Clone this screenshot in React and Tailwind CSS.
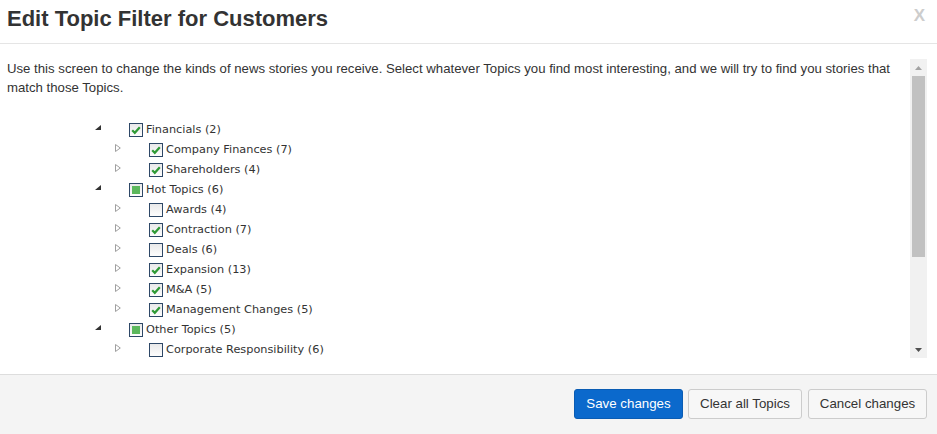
import React from "react";

const topics = [
  { label: "Financials (2)", level: 0, state: "checked" },
  { label: "Company Finances (7)", level: 1, state: "checked" },
  { label: "Shareholders (4)", level: 1, state: "checked" },
  { label: "Hot Topics (6)", level: 0, state: "partial" },
  { label: "Awards (4)", level: 1, state: "none" },
  { label: "Contraction (7)", level: 1, state: "checked" },
  { label: "Deals (6)", level: 1, state: "none" },
  { label: "Expansion (13)", level: 1, state: "checked" },
  { label: "M&A (5)", level: 1, state: "checked" },
  { label: "Management Changes (5)", level: 1, state: "checked" },
  { label: "Other Topics (5)", level: 0, state: "partial" },
  { label: "Corporate Responsibility (6)", level: 1, state: "none" },
];

function Checkbox({ state }) {
  return (
    <span className="flex h-[14px] w-[14px] shrink-0 items-center justify-center border border-[#2d4766] bg-gradient-to-b from-[#e9e9e9] to-[#fdfdfd]">
      {state === "checked" && (
        <svg width="12" height="12" viewBox="0 0 12 12">
          <path d="M2.2 6.2 L4.8 8.8 L9.8 3.2" fill="none" stroke="#2f9a35" strokeWidth="2.2" />
        </svg>
      )}
      {state === "partial" && <span className="h-[8px] w-[8px] bg-[#5cb85c]" />}
    </span>
  );
}

function Toggle({ level }) {
  if (level === 0) {
    return (
      <span className="w-[34px] shrink-0 self-start pt-[5px]">
        <svg width="6" height="5" viewBox="0 0 6 5" className="block">
          <polygon points="6,0 6,5 0,5" fill="#333" />
        </svg>
      </span>
    );
  }
  return (
    <span className="w-[34px] shrink-0 self-start pt-[4px]">
      <svg width="6" height="8" viewBox="0 0 6 8" className="block">
        <polygon points="0.5,0.5 5.3,4 0.5,7.5" fill="none" stroke="#a0a0a0" strokeWidth="1" />
      </svg>
    </span>
  );
}

function Scrollbar() {
  return (
    <div className="flex h-full w-[17px] shrink-0 flex-col bg-[#f1f1f1]">
      <div className="flex h-[17px] items-center justify-center">
        <svg width="7" height="4" viewBox="0 0 7 4">
          <polygon points="3.5,0 7,4 0,4" fill="#a3a3a3" />
        </svg>
      </div>
      <div className="mx-[2px] h-[181px] bg-[#c1c1c1]" />
      <div className="flex-1" />
      <div className="flex h-[17px] items-center justify-center">
        <svg width="7" height="4" viewBox="0 0 7 4">
          <polygon points="0,0 7,0 3.5,4" fill="#505050" />
        </svg>
      </div>
    </div>
  );
}

export default function App() {
  return (
    <div className="flex h-[434px] w-full flex-col bg-white font-['Liberation_Sans',Arial,sans-serif] text-[#333]">
      <div className="flex h-[44px] shrink-0 justify-between border-b border-[#e5e5e5] pl-[7px] pr-[12px]">
        <h1 className="pt-[6px] text-[22px] font-bold leading-[25px] text-[#333]">
          Edit Topic Filter for Customers
        </h1>
        <span className="pt-[6px] text-[17px] font-bold leading-[20px] text-[#cdcdcd]">X</span>
      </div>

      <div className="flex h-[330px] shrink-0 pb-[16px] pr-[10px] pt-[15px]">
        <div className="min-w-0 flex-1 overflow-hidden pl-[7px] pr-[6px]">
          <p className="mb-[23px] text-[13.2px] leading-[19px]">
            Use this screen to change the kinds of news stories you receive. Select whatever Topics you find most
            interesting, and we will try to find you stories that match those Topics.
          </p>
          <ul className="font-['DejaVu_Sans',Verdana,sans-serif] text-[11.3px] text-[#333]">
            {topics.map((t) => (
              <li
                key={t.label}
                className={
                  "flex h-[20px] items-center " + (t.level === 0 ? "pl-[88px]" : "pl-[108px]")
                }
              >
                <Toggle level={t.level} />
                <Checkbox state={t.state} />
                <span className="ml-[3px] whitespace-nowrap">{t.label}</span>
              </li>
            ))}
          </ul>
        </div>
        <Scrollbar />
      </div>

      <div className="flex flex-1 items-start justify-end gap-[5px] border-t border-[#dddddd] bg-[#f4f4f4] pr-[10px] pt-[14px] text-[13.3px]">
        <button className="h-[30px] w-[109px] rounded-[3px] border border-[#0a5cb3] bg-[#0b69cc] text-white">
          Save changes
        </button>
        <button className="h-[30px] w-[114px] rounded-[3px] border border-[#cccccc] bg-[#f7f7f7] text-[#333]">
          Clear all Topics
        </button>
        <button className="ml-[1px] h-[30px] w-[119px] rounded-[3px] border border-[#cccccc] bg-[#f7f7f7] text-[#333]">
          Cancel changes
        </button>
      </div>
    </div>
  );
}
